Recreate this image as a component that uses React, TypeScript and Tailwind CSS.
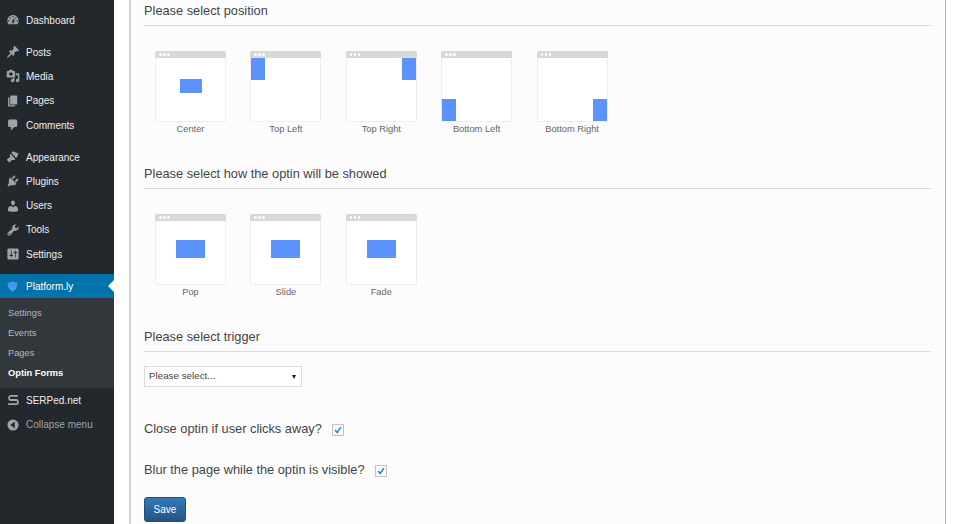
import { ReactNode } from 'react';

const FONT = "font-['Liberation_Sans',Arial,sans-serif]";

const ICONS: Record<string, string> = {
  dashboard:
    'M3.76 16h12.48c1.1-1.37 1.76-3.11 1.76-5 0-4.42-3.58-8-8-8s-8 3.58-8 8c0 1.89.66 3.63 1.76 5zM10 4c.55 0 1 .45 1 1s-.45 1-1 1-1-.45-1-1 .45-1 1-1zM6 6c.55 0 1 .45 1 1s-.45 1-1 1-1-.45-1-1 .45-1 1-1zm8 0c.55 0 1 .45 1 1s-.45 1-1 1-1-.45-1-1 .45-1 1-1zm-5.37 5.55L12 7v6c0 1.1-.9 2-2 2s-2-.9-2-2c0-.57.24-1.08.63-1.45zM4 10c.55 0 1 .45 1 1s-.45 1-1 1-1-.45-1-1 .45-1 1-1zm12 0c.55 0 1 .45 1 1s-.45 1-1 1-1-.45-1-1 .45-1 1-1zm-5 3c0-.55-.45-1-1-1s-1 .45-1 1 .45 1 1 1 1-.45 1-1z',
  posts:
    'M10.44 3.02l1.82-1.82 6.36 6.35-1.83 1.82c-1.05-.68-2.48-.57-3.41.36l-.75.75c-.92.93-1.04 2.35-.35 3.41l-1.83 1.82-2.41-2.41-2.8 2.79c-.42.42-3.38 2.71-3.8 2.29s1.86-3.39 2.28-3.81l2.79-2.79L4.1 9.36l1.83-1.82c1.05.69 2.48.57 3.4-.36l.75-.75c.93-.92 1.05-2.35.36-3.41z',
  media:
    'M13 11V4c0-.55-.45-1-1-1h-1.67L9 1H5L3.67 3H2c-.55 0-1 .45-1 1v7c0 .55.45 1 1 1h10c.55 0 1-.45 1-1zM7 4.5c1.38 0 2.5 1.12 2.5 2.5S8.38 9.5 7 9.5 4.5 8.38 4.5 7 5.62 4.5 7 4.5zM14 6h5v10.5c0 1.38-1.12 2.5-2.5 2.5S14 17.88 14 16.5s1.12-2.5 2.5-2.5c.17 0 .34.02.5.05V9h-3V6zm-4 8.05V13h2v3.5c0 1.38-1.12 2.5-2.5 2.5S7 17.88 7 16.5 8.12 14 9.5 14c.17 0 .34.02.5.05z',
  pages: 'M6 15V2h10v13H6zm-1 1h8v2H3V5h2v11z',
  comments: 'M5 2h9c1.1 0 2 .9 2 2v7c0 1.1-.9 2-2 2h-2l-5 5v-5H5c-1.1 0-2-.9-2-2V4c0-1.1.9-2 2-2z',
  appearance:
    'M14.5 11.5L7.5 4l1.5-1.5c.6-.6 2.3-.5 3.5.3l6 2.7c-1.6.6-2.2 1.8-1.7 3.2zM13.3 12.7L6.3 5.3C5 6.8 5.5 8.3 5.8 9.8 5.9 10.9 3 11.5 1.5 13.5c-.5.8 0 1.2.5 1.5 1 .7 2.3 2.3 3.2 3 1.8-1.5 2.3-4 3.8-3.8 1.5.2 3 .4 4.3-1.5z',
  plugins:
    'M13.11 4.36L9.87 7.6 8 5.73l3.24-3.24c.35-.34 1.05-.2 1.56.32.52.51.66 1.21.31 1.55zm-8 1.77l.91-1.12 9.01 9.01-1.19.84c-.71.71-2.63 1.16-3.82 1.16H6.14L4.9 17.26c-.59.59-1.54.59-2.12 0-.59-.58-.59-1.53 0-2.12l1.24-1.24v-3.88c0-1.13.4-3.19 1.09-3.89zm7.26 3.97l3.24-3.24c.34-.35 1.04-.21 1.55.31.52.51.66 1.21.31 1.55l-3.24 3.25z',
  users:
    'M10 9.25c-2.27 0-2.73-3.44-2.73-3.44C7 4.02 7.82 2 9.97 2c2.16 0 2.98 2.02 2.71 3.81 0 0-.41 3.44-2.68 3.44zm0 2.57L12.72 10c2.39 0 4.52 2.33 4.52 4.53v2.49s-3.65 1.13-7.24 1.13c-3.65 0-7.24-1.13-7.24-1.13v-2.49c0-2.25 1.94-4.48 4.47-4.48z',
  tools:
    'M16.68 9.77c-1.34 1.34-3.3 1.67-4.95.99l-5.41 6.52c-.99.99-2.59.99-3.58 0s-.99-2.59 0-3.57l6.52-5.42c-.68-1.65-.35-3.61.99-4.95 1.28-1.28 3.12-1.62 4.72-1.06l-2.89 2.89 2.82 2.82 2.86-2.87c.53 1.58.18 3.39-1.08 4.65zM3.81 16.21c.4.39 1.04.39 1.43 0 .4-.4.4-1.04 0-1.43-.39-.4-1.03-.4-1.43 0-.39.39-.39 1.03 0 1.43z',
  settings:
    'M18 16V4c0-1.1-.9-2-2-2H4c-1.1 0-2 .9-2 2v12c0 1.1.9 2 2 2h12c1.1 0 2-.9 2-2zM8 11h1c.55 0 1 .45 1 1s-.45 1-1 1H8v1.5c0 .28-.22.5-.5.5s-.5-.22-.5-.5V13H6c-.55 0-1-.45-1-1s.45-1 1-1h1V5.5c0-.28.22-.5.5-.5s.5.22.5.5V11zm5-2h-1c-.55 0-1-.45-1-1s.45-1 1-1h1V5.5c0-.28.22-.5.5-.5s.5.22.5.5V7h1c.55 0 1 .45 1 1s-.45 1-1 1h-1v5.5c0 .28-.22.5-.5.5s-.5-.22-.5-.5V9z',
  shield: 'M10 2c2.5 1.5 5 2 7.5 2 0 6-1.5 11-7.5 14C4 15 2.5 10 2.5 4 5 4 7.5 3.5 10 2z',
  serped: 'M17 4H7C3.5 4 3.5 10 7 10H14.5C18 10 18 16 14.5 16H3',
  collapse: 'M10 2a8 8 0 1 0 0 16 8 8 0 0 0 0-16zm2.5 3.5v9L6 10z',
};

function MenuIcon({ name, className }: { name: string; className: string }) {
  if (name === 'serped') {
    return (
      <svg viewBox="0 0 20 20" className={className} fill="none" stroke="currentColor" strokeWidth="2.6">
        <path d={ICONS.serped} />
      </svg>
    );
  }
  return (
    <svg viewBox="0 0 20 20" className={className} fill="currentColor">
      <path d={ICONS[name]} fillRule="evenodd" />
    </svg>
  );
}

function MenuItem({ icon, label, muted }: { icon: string; label: string; muted?: boolean }) {
  return (
    <div className="flex h-[24.3px] items-center">
      <div className="flex w-[26px] justify-center pr-[1px]">
        <MenuIcon name={icon} className="h-[14px] w-[14px] text-[#9ea3a8]" />
      </div>
      <span className={`text-[10px] ${muted ? 'text-[#9ea3a8]' : 'text-[#eeeeee]'}`}>{label}</span>
    </div>
  );
}

function Sidebar() {
  return (
    <aside className="flex h-full w-[114px] shrink-0 flex-col bg-[#23282d] pt-[8px]">
      <MenuItem icon="dashboard" label="Dashboard" />
      <div className="h-[7.7px]" />
      <MenuItem icon="posts" label="Posts" />
      <MenuItem icon="media" label="Media" />
      <MenuItem icon="pages" label="Pages" />
      <MenuItem icon="comments" label="Comments" />
      <div className="h-[7.7px]" />
      <MenuItem icon="appearance" label="Appearance" />
      <MenuItem icon="plugins" label="Plugins" />
      <MenuItem icon="users" label="Users" />
      <MenuItem icon="tools" label="Tools" />
      <MenuItem icon="settings" label="Settings" />
      <div className="h-[7.7px]" />

      <div className="relative flex h-[24.3px] items-center bg-[#0073aa]">
        <div className="flex w-[26px] justify-center pr-[1px]">
          <MenuIcon name="shield" className="h-[13px] w-[13px] text-[#3f9bf0]" />
        </div>
        <span className="text-[10px] text-white">Platform.ly</span>
        <div className="absolute right-0 top-[6px] h-0 w-0 border-y-[6px] border-r-[6px] border-y-transparent border-r-white" />
      </div>
      <div className="flex h-[90px] flex-col bg-[#32373c] pl-[8px] pt-[6px] text-[9.3px] text-[#b4b9be]">
        <div className="flex h-[20px] items-center">Settings</div>
        <div className="flex h-[20px] items-center">Events</div>
        <div className="flex h-[20px] items-center">Pages</div>
        <div className="flex h-[20px] items-center font-bold text-white">Optin Forms</div>
      </div>

      <MenuItem icon="serped" label="SERPed.net" />
      <MenuItem icon="collapse" label="Collapse menu" muted />
    </aside>
  );
}

function Heading({ children, className }: { children: ReactNode; className: string }) {
  return (
    <div className={`h-[23px] border-b border-[#dcdcdc] ${className}`}>
      <h2 className="text-[12.8px] leading-[15px] text-[#444444]">{children}</h2>
    </div>
  );
}

function Preview({ label, children, body }: { label: string; children: ReactNode; body: string }) {
  return (
    <div className="flex w-[71px] flex-col items-center">
      <div className="flex h-[71px] w-full flex-col rounded-[2px] border-x border-b border-[#eeeeee] bg-white">
        <div className="-mx-px flex h-[7px] shrink-0 items-center gap-[1.5px] rounded-t-[2px] bg-[#d8d8d8] pl-[4px]">
          <span className="h-[2.5px] w-[2.5px] rounded-full bg-white" />
          <span className="h-[2.5px] w-[2.5px] rounded-full bg-white" />
          <span className="h-[2.5px] w-[2.5px] rounded-full bg-white" />
        </div>
        <div className={`flex flex-1 ${body}`}>{children}</div>
      </div>
      <span className="mt-[1.5px] text-[9.3px] leading-[11px] text-[#666666]">{label}</span>
    </div>
  );
}

function Corner({ label, place }: { label: string; place: string }) {
  return (
    <Preview label={label} body={place}>
      <div className="h-[22px] w-[14px] bg-[#5b92fb]" />
    </Preview>
  );
}

function Center({ label, size }: { label: string; size: string }) {
  return (
    <Preview label={label} body="items-center justify-center pb-[8px]">
      <div className={`bg-[#5b92fb] ${size}`} />
    </Preview>
  );
}

function Check({ label, className }: { label: string; className: string }) {
  return (
    <div className={`flex items-center ${className}`}>
      <span className="text-[12.8px] leading-[15px] text-[#444444]">{label}</span>
      <span className="ml-[10px] mt-[2px] flex h-[12px] w-[12px] items-center justify-center border border-[#c4c4c4] bg-[#fafafa]">
        <svg viewBox="0 0 12 12" className="h-[10px] w-[10px]" fill="none" stroke="#1e8cbe" strokeWidth="1.8">
          <path d="M2.5 6l2.5 3L9.5 2.5" />
        </svg>
      </span>
    </div>
  );
}

export default function App() {
  return (
    <div className={`flex h-[524px] w-[960px] overflow-hidden bg-white ${FONT}`}>
      <Sidebar />
      <main className="flex-1 overflow-hidden pl-[15px] pr-[14px]">
        <div className="h-[560px] border-r border-l-2 border-r-[#b5b5b5] border-l-[#d0d0d0] bg-[#fcfcfc] pl-[13px] pr-[14px] pt-[3px]">
          <Heading className="">Please select position</Heading>
          <div className="mt-[25px] flex gap-[24.4px] pl-[11px]">
            <Center label="Center" size="h-[14px] w-[22px]" />
            <Corner label="Top Left" place="items-start justify-start" />
            <Corner label="Top Right" place="items-start justify-end" />
            <Corner label="Bottom Left" place="items-end justify-start" />
            <Corner label="Bottom Right" place="items-end justify-end" />
          </div>

          <Heading className="mt-[31.5px]">Please select how the optin will be showed</Heading>
          <div className="mt-[25px] flex gap-[24.4px] pl-[11px]">
            <Center label="Pop" size="h-[18px] w-[29px]" />
            <Center label="Slide" size="h-[18px] w-[29px]" />
            <Center label="Fade" size="h-[18px] w-[29px]" />
          </div>

          <Heading className="mt-[31.5px]">Please select trigger</Heading>
          <div className="mt-[14px] flex h-[21px] w-[158px] items-center justify-between border border-[#dddddd] bg-white pl-[4px] pr-[5px] text-[9.8px] text-[#444444]">
            <span>Please select...</span>
            <span className="h-0 w-0 border-x-[2.5px] border-t-[4px] border-x-transparent border-t-[#222222]" />
          </div>

          <Check label="Close optin if user clicks away?" className="mt-[34px]" />
          <Check label="Blur the page while the optin is visible?" className="mt-[26px]" />

          <button className="mt-[20px] h-[25px] w-[42px] rounded-[3px] border border-[#1d4f7f] bg-gradient-to-b from-[#337ab7] to-[#245580] text-[10px] text-white">
            Save
          </button>
        </div>
      </main>
    </div>
  );
}
